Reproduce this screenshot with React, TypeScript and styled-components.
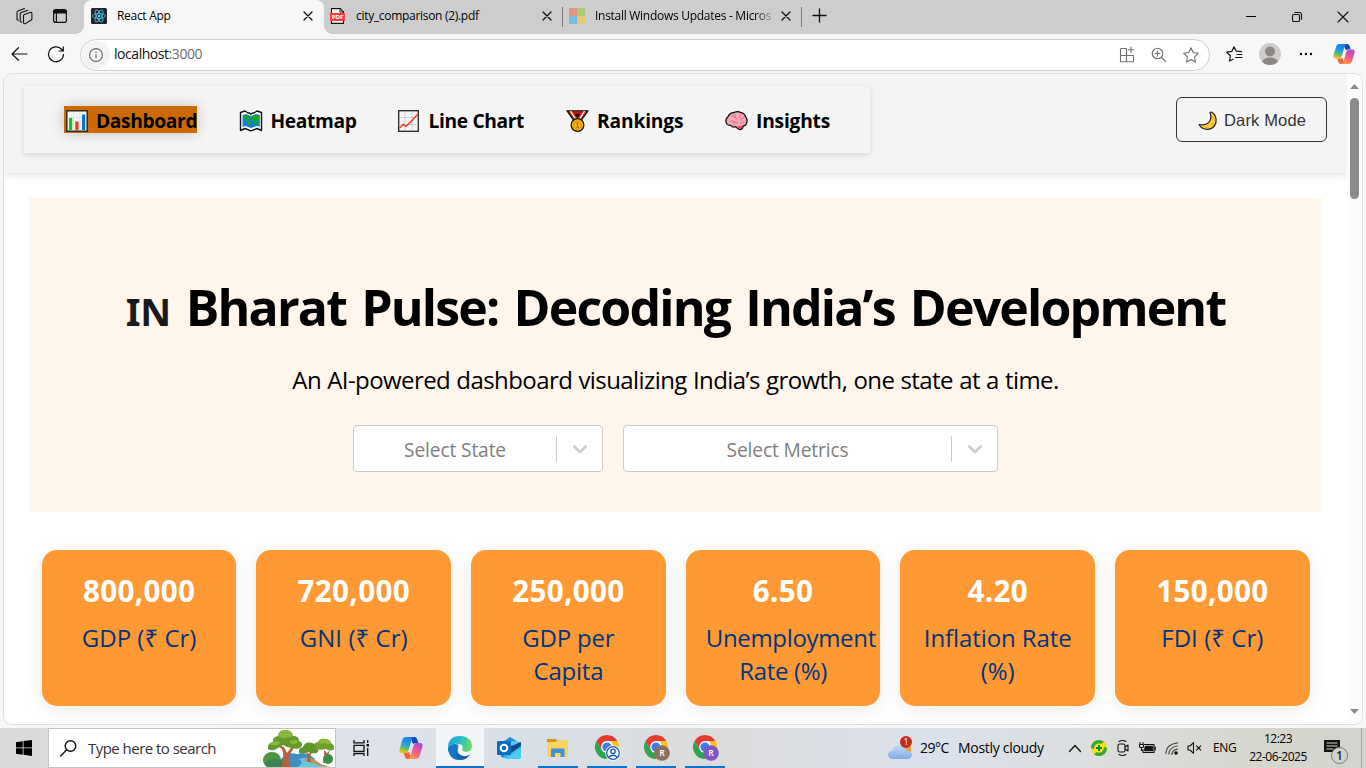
import React from "react";
import styled, { createGlobalStyle, css } from "styled-components";

const Global = createGlobalStyle`
  *, *::before, *::after { box-sizing: border-box; }
  html, body { margin: 0; padding: 0; }
  body {
    width: 1366px; height: 768px; overflow: hidden; background: #f7f7f7;
    font-family: "Open Sans", "Noto Sans", sans-serif; color: #000;
  }
  svg { display: block; flex: none; overflow: visible; }
`;

const Screen = styled.div`
  display: flex; flex-direction: column; width: 1366px; height: 768px; background: #f7f7f7;
`;

/* ---------- browser chrome ---------- */

const TabStrip = styled.div`
  display: flex; height: 34px; background: #cdcdcd; align-items: stretch;
`;
const StripTools = styled.div`
  width: 84px; display: flex; align-items: center; gap: 20px; padding: 0 0 2px 16px;
`;
const Tab = styled.div<{ $width: number; $active?: boolean; $divider?: boolean }>`
  position: relative; display: flex; align-items: center; width: ${p => p.$width}px;
  padding: 0 12px 2px ${p => (p.$active ? 7 : 6)}px; font-size: 12px; white-space: nowrap;
  ${p => p.$active && css`
    background: #f7f7f7; border-radius: 8px 8px 0 0;
    &::before, &::after { content: ""; position: absolute; bottom: 0; width: 8px; height: 8px; }
    &::before { left: -8px; background: radial-gradient(circle at 0 0, transparent 7.5px, #f7f7f7 8px); }
    &::after { right: -8px; background: radial-gradient(circle at 100% 0, transparent 7.5px, #f7f7f7 8px); }
  `}
  ${p => p.$divider && css`
    &::after { content: ""; position: absolute; right: 0; top: 7px; width: 1px; height: 20px; background: #7d7d7d; }
  `}
`;
const TabTitle = styled.span<{ $spacing: number; $fade?: boolean }>`
  flex: 1; min-width: 0; margin-left: 10px; line-height: 18px;
  letter-spacing: ${p => p.$spacing}px;
  ${p => p.$fade && css`mask-image: linear-gradient(90deg, #000 160px, rgba(0,0,0,.15) 178px);`}
`;
const NewTab = styled.div`padding: 9px 0 0 11px;`;
const WindowButtons = styled.div`
  margin-left: auto; display: flex; align-items: center; gap: 36px; padding: 0 18px 0 0;
`;

const Toolbar = styled.div`
  display: flex; align-items: center; height: 39px; padding: 0 11px 0 11px; background: #f7f7f7;
`;
const AddressBar = styled.div`
  display: flex; align-items: center; width: 1130px; height: 32px; margin: 2px 0 0 16px; flex: none;
  padding: 0 10px 0 1px; background: #fff; border: 1px solid #cfcfcf; border-radius: 16px;
`;
const ToolbarGap = styled.span`width: 20px; flex: none;`;
const SiteInfo = styled.div`
  display: grid; place-items: center; width: 28px; height: 28px; border-radius: 50%; background: #f3f3f3;
`;
const Url = styled.span`
  margin-left: 4px; padding-bottom: 2px; flex: 1; font-size: 14px; line-height: 20px; letter-spacing: -0.45px; color: #111;
  em { font-style: normal; color: #6b6b6b; }
`;
const AddressTools = styled.div`display: flex; gap: 16px; align-items: center;`;
const BarTools = styled.div`
  display: grid; grid-template-columns: 33px 40px 34px 22px; align-items: center; margin: 1px 0 0 16px;
`;

/* ---------- page ---------- */

const PageFrame = styled.div`
  display: flex; width: 1360px; height: 652px; margin-left: 3px; flex: none;
  border: 1px solid #dedede; border-radius: 9px; background: #fff; overflow: hidden;
`;
const Page = styled.div`flex: 1; min-width: 0; overflow: hidden;`;
const ScrollTrack = styled.div`
  width: 15px; background: #fcfcfc; display: flex; flex-direction: column; align-items: center;
  padding: 10px 0 10px;
`;
const ScrollThumb = styled.div`
  width: 9px; height: 101px; margin: 9px 0 auto; border-radius: 5px; background: #8b8b8b;
`;
const Header = styled.header`
  display: flex; justify-content: space-between; align-items: flex-start; height: 99px;
  padding: 12px 20px; background: #f4f4f4; box-shadow: 0 2px 8px rgba(0,0,0,.12);
`;
const Nav = styled.nav`
  display: flex; width: 846px; height: 67px; padding: 20px 40px; justify-content: space-between;
  background: #f4f4f4; box-shadow: 0 2px 6px rgba(0,0,0,.13);
`;
const NavItem = styled.a<{ $width: number; $spacing: number; $gap: number; $active?: boolean }>`
  display: flex; align-items: center; gap: ${p => p.$gap}px; width: ${p => p.$width}px; height: 27px;
  padding-top: 2px; padding-left: ${p => (p.$active ? 2 : 0)}px;
  font-size: 19.2px; font-weight: 700; line-height: 25px; white-space: nowrap;
  letter-spacing: ${p => p.$spacing}px;
  ${p => p.$active && css`background: #cc6a00; box-shadow: 0 0 14px rgba(0,0,0,.2);`}
`;
const ModeButton = styled.button`
  display: flex; align-items: center; gap: 6px; width: 151px; height: 45px; margin: 11px 0 0 0;
  padding: 2px 0 0 21px; border: 1px solid #333; border-radius: 6px; background: transparent;
  font: 16.5px "Liberation Sans", sans-serif; letter-spacing: 0.15px; color: #333; white-space: nowrap;
`;
const Hero = styled.section`
  display: flex; flex-direction: column; align-items: center; width: 1293px; height: 314px;
  margin: 25px 0 0 25px; padding-top: 75px; background: #fef5ec;
`;
const HeroTitle = styled.h1`
  margin: 0; height: 68px; font-size: 50px; line-height: 68px; font-weight: 700;
  letter-spacing: -1.83px; word-spacing: 4px; white-space: nowrap; display: flex;
`;
const CountryCode = styled.span`
  width: 60px; font: 700 38px/68px "Noto Sans", sans-serif; letter-spacing: -0.2px; padding-top: 4px; color: #1a1a1a;
`;
const Tagline = styled.p`
  margin: 23px 0 29px; font-size: 24px; line-height: 32px; letter-spacing: -0.58px; word-spacing: 0.5px; white-space: nowrap;
`;
const Filters = styled.div`display: flex; gap: 20px;`;
const Select = styled.div<{ $width: number }>`
  display: flex; align-items: center; width: ${p => p.$width}px; height: 47px;
  background: #fff; border: 1px solid #ccc; border-radius: 4px;
`;
const Placeholder = styled.span`
  flex: 1; text-align: center; font-size: 19.2px; line-height: 26px; letter-spacing: -0.13px; color: #808080;
  padding-top: 3px;
`;
const Separator = styled.span`width: 1px; height: 26px; background: #ccc;`;
const Indicator = styled.span`width: 45px; display: grid; place-items: center; padding-top: 1px;`;

const Metrics = styled.section`
  display: grid; grid-template-columns: repeat(6, minmax(0, 1fr)); gap: 20px;
  width: 1267.9px; margin: 38px 0 0 37.8px;
`;
const Card = styled.article`
  height: 156px; padding: 21px 20px 19px; border-radius: 15px; background: #ff9933;
  box-shadow: 0 4px 20px rgba(0,0,0,.08); text-align: center;
`;
const CardValue = styled.div`
  font-size: 29.6px; line-height: 40px; font-weight: 700; letter-spacing: 0.35px; color: #fff;
`;
const CardLabel = styled.div<{ $spacing: number }>`
  margin-top: 10px; font-size: 24px; line-height: 33px; letter-spacing: ${p => p.$spacing}px; color: #003580;
`;

/* ---------- taskbar ---------- */

const Taskbar = styled.footer`
  display: flex; height: 40px; margin-top: 3px; flex: none;
  background: linear-gradient(90deg, #dcd9d9 0, #dfe2ea 27%, #d9dfe6 40%, #dcdcdc 52%, #dbe1ec 68%, #dcdedf 80%, #d6d6ce 93%, #d4d4cf 100%);
`;
const StartButton = styled.div`width: 48px; display: grid; place-items: center;`;
const SearchBox = styled.div`
  display: flex; align-items: center; width: 288px; margin-right: 1px; padding-left: 11px; background: #fff;
  border: 1px solid #c4c4c4; overflow: hidden;
`;
const SearchText = styled.span`
  margin-left: 11px; flex: 1; font-size: 15px; line-height: 20px; letter-spacing: -0.53px; color: #333; white-space: nowrap;
`;
const TaskItem = styled.div<{ $focused?: boolean; $running?: boolean; $shift?: number }>`
  position: relative; width: 49px; display: grid; place-items: center; padding-left: ${p => p.$shift ?? 0}px;
  ${p => p.$focused && css`background: linear-gradient(90deg, transparent 1px, #f2f4f7 1px);`}
  ${p => p.$running && css`
    &::after {
      content: ""; position: absolute; bottom: 0; height: 2px; background: #0a74cf;
      left: ${p.$focused ? 1 : 5}px; right: ${p.$focused ? 0 : 4}px;
    }
  `}
`;
const Tray = styled.div`display: flex; align-items: center; margin-left: auto; height: 40px;`;
const TraySlot = styled.div<{ $width: number; $start?: boolean; $drop?: number }>`
  width: ${p => p.$width}px; display: flex; justify-content: ${p => (p.$start ? "flex-start" : "center")};
  padding-top: ${p => p.$drop ?? 0}px;
`;
const TrayText = styled.span<{ $width: number; $size: number; $spacing: number }>`
  width: ${p => p.$width}px; font-size: ${p => p.$size}px; letter-spacing: ${p => p.$spacing}px;
  line-height: 18px; white-space: nowrap;
`;
const Clock = styled.div`
  width: 62px; margin: 0 1px 0 9px; text-align: center; font-size: 12px; line-height: 18px; letter-spacing: -0.5px; white-space: nowrap;
`;
const ShowDesktop = styled.div`width: 5px; height: 40px; border-left: 1px solid #a8a8a4;`;

/* ---------- icons ---------- */

const line = { fill: "none", stroke: "#111", strokeWidth: 1.1, strokeLinecap: "round", strokeLinejoin: "round" } as const;

const WorkspacesIcon = () => (
  <svg width="17" height="17" viewBox="0 0 17 17" {...line}>
    <path d="M7.500 7.800q0-1 1-1.400L14 4.500q1.800-.4 1.900 1.100v5.100q0 1-1 1.500L9.200 15.600Q7.500 16 7.500 14.600z" />
    <path d="M4.200 13.500V6.200q0-1.200 1-1.600L11.800 2.300M1 11.500V4.700q0-1.200 1-1.600L8.500.6M1 11.500l1.200.8M4.200 13.500l1.300.8" />
  </svg>
);
const TabActionsIcon = () => (
  <svg width="14" height="14" viewBox="0 0 14 14" {...line} strokeWidth="1.2">
    <rect x=".6" y=".6" width="12.8" height="12.8" rx="2.2" />
    <path d="M1 1.500h12v2.500H1z" fill="#111" /><path d="M3.400 4v9" />
  </svg>
);
const ReactIcon = () => (
  <svg width="16" height="16" viewBox="0 0 16 16">
    <rect width="16" height="16" rx="1.5" fill="#20232a" />
    <g fill="none" stroke="#4db6d2" strokeWidth=".9">
      <ellipse cx="8" cy="8" rx="6.6" ry="2.5" />
      <ellipse cx="8" cy="8" rx="6.6" ry="2.5" transform="rotate(60 8 8)" />
      <ellipse cx="8" cy="8" rx="6.6" ry="2.5" transform="rotate(120 8 8)" />
    </g>
    <circle cx="8" cy="8" r="1.3" fill="#61dafb" />
  </svg>
);
const PdfText = styled.text`font: 700 6px "Open Sans", sans-serif; fill: #fff;`;
const PdfIcon = () => (
  <svg width="16" height="16" viewBox="0 0 16 16">
    <path d="M1.500.6h8.700l3.300 3.300v11.500h-12z" fill="#fff" stroke="#111" strokeWidth="1.1" />
    <path d="M10 .6v3.500h3.500" fill="none" stroke="#111" />
    <rect y="5" width="15" height="8" fill="#ff3b3b" />
    <PdfText x="7.5" y="11.200" textAnchor="middle">PDF</PdfText>
  </svg>
);
const MicrosoftIcon = () => (
  <svg width="16" height="16" viewBox="0 0 16 16">
    <path fill="#e2957f" d="M0 0h8v8H0z" /><path fill="#accb77" d="M8 0h8v8H8z" />
    <path fill="#78bbdc" d="M0 8h8v8H0z" /><path fill="#e5c776" d="M8 8h8v8H8z" />
  </svg>
);
const CloseIcon = ({ size = 8 }: { size?: number }) => (
  <svg width={size} height={size} viewBox="0 0 10 10" {...line} strokeWidth={size > 8 ? 1.1 : 1.6}>
    <path d="m0 0 10 10M10 0 0 10" />
  </svg>
);
const PlusIcon = () => <svg width="13" height="13" viewBox="0 0 13 13" {...line} strokeWidth="1.3"><path d="M6.500 0v13M0 6.500h13" /></svg>;
const MinimizeIcon = () => <svg width="10" height="10" viewBox="0 0 10 10"><path d="M0 4h10v1H0z" /></svg>;
const RestoreIcon = () => (
  <svg width="10" height="10" viewBox="0 0 10 10" {...line}>
    <rect x=".5" y="2.5" width="7" height="7" rx="1.3" /><path d="M2.700.5H7.500q2 0 2 2v4.800" />
  </svg>
);
const BackIcon = () => <svg width="17" height="14" viewBox="0 0 17 14" {...line} strokeWidth="1.2"><path d="M16 7H1M7.500.7 1 7l6.500 6.300" /></svg>;
const ReloadIcon = () => (
  <svg width="16" height="16" viewBox="0 0 16 16" {...line} strokeWidth="1.2">
    <path d="M15.500 8.500A7.500 7.500 0 1 1 13.300 3L15.200 5M15.300.8V5H11" />
  </svg>
);
const InfoIcon = () => (
  <svg width="14" height="14" viewBox="0 0 14 14" fill="none" stroke="#666" strokeWidth="1.1">
    <circle cx="7" cy="7" r="6.4" /><path d="M7 6.200v4M7 3.800v1.200" />
  </svg>
);
const gray = { ...line, stroke: "#707070" };
const AppsAddIcon = () => (
  <svg width="16" height="16" viewBox="0 0 16 16" {...gray}>
    <path d="M7.500 1.500H2.200q-.7 0-.7.700V14q0 .7.700.7H13.800q.7 0 .7-.7V8.500H1.500M7.500 1.500v13M12 0v5.500M9.300 2.800h5.500" />
  </svg>
);
const ZoomIcon = () => (
  <svg width="16" height="16" viewBox="0 0 16 16" {...gray}>
    <circle cx="6.5" cy="6.5" r="5.3" /><path d="m10.500 10.500 4.300 4.200M6.500 4v5M4 6.500h5" />
  </svg>
);
const StarIcon = () => (
  <svg width="16" height="16" viewBox="0 0 16 16" {...gray}>
    <path d="m8 .8 2.200 4.700 5.200.7-3.800 3.600.9 5.200L8 12.500 3.500 15l.9-5.200L.6 6.200l5.200-.7z" />
  </svg>
);
const FavoritesIcon = () => (
  <svg width="17" height="16" viewBox="0 0 17 16" {...line} strokeWidth="1.2">
    <path d="M15.500 5.700 10.300 5.200 8 .8 5.800 5.400.7 6.200l3.700 3.600-.9 5.200L7 13.200M11 8.500h5M9.500 11.500H16" />
  </svg>
);
const AvatarIcon = () => (
  <svg width="22" height="22" viewBox="0 0 22 22">
    <defs><clipPath id="avatar"><circle cx="11" cy="11" r="11" /></clipPath></defs>
    <circle cx="11" cy="11" r="11" fill="#d0cecb" />
    <g clipPath="url(#avatar)" fill="#8b8885"><circle cx="11" cy="8.5" r="5" /><ellipse cx="11" cy="19.5" rx="8" ry="5" /></g>
  </svg>
);
const MoreIcon = () => (
  <svg width="14" height="4" viewBox="0 0 14 4"><circle cx="2" cy="2" r="1.2" /><circle cx="7" cy="2" r="1.2" /><circle cx="12" cy="2" r="1.2" /></svg>
);
const CopilotIcon = ({ id, size }: { id: string; size: number }) => (
  <svg width={size} height={size} viewBox="0 0 24 24">
    <defs>
      <linearGradient id={id + "a"} x1=".6" y1="0" x2=".3" y2="1"><stop stopColor="#1a7fe0" /><stop offset=".45" stopColor="#1aa0e8" /><stop offset=".7" stopColor="#63bd6a" /><stop offset="1" stopColor="#f2c512" /></linearGradient>
      <linearGradient id={id + "b"} x1=".8" y1="0" x2=".3" y2="1"><stop stopColor="#a04be8" /><stop offset=".5" stopColor="#f0588c" /><stop offset="1" stopColor="#ff9a4a" /></linearGradient>
    </defs>
    <path d="M11 1h4.500q2 0 2.700 2.200L19.300 7q-3.300-.3-5.300 1z" fill="#1549b8" />
    <path d="M6.800 1H15q-1.700.2-2.500 3l-3 10.500Q8.700 17 6.500 17H3Q-.5 17 .6 13L3.400 3.700Q4.300 1 6.800 1z" fill={`url(#${id}a)`} />
    <path d="M13 23H8.500q-2 0-2.700-2.200L4.700 17q3.300.3 5.300-1z" fill="#f2643c" />
    <path d="M17.200 23H9q1.700-.2 2.500-3l3-10.500Q15.300 7 17.500 7H21q3.500 0 2.400 4l-2.800 9.300q-.9 2.700-3.400 2.700z" fill={`url(#${id}b)`} />
  </svg>
);

const BarChartIcon = () => (
  <svg width="22" height="22" viewBox="0 0 22 22">
    <rect x=".8" y=".8" width="20.4" height="20.4" fill="#f4f4f4" stroke="#222" strokeWidth="1.4" />
    <path d="M7.500 2v18M14 2v18M2 7.500h18M2 14h18" stroke="#ddd" strokeWidth=".7" />
    <path fill="#16c60c" d="M3 8h3.200v12H3z" /><path fill="#f03a17" d="M9.300 11.500h3.200V20H9.300z" /><path fill="#0078d7" d="M16 4.500h3.200V20H16z" />
  </svg>
);
const MapIcon = () => (
  <svg width="24" height="22" viewBox="0 0 24 22">
    <path d="M1.500 2.500 6 1l3 2h1.500L12 4.300 13.500 3H15l3-2 4.500 1.500v18L18 18.500l-6 2.300-6-2.300-4.500 2z" fill="#fff" stroke="#111" strokeWidth="1.4" strokeLinejoin="round" />
    <path d="M3.500 5 7 4l5 2 5-2 3.800 1v11.800L17.500 16 12 18l-5.500-2-3 1z" fill="#1580dc" />
    <path d="M5 6l4-1 2.200 1.800L10 9.500 7.500 11 5 8.500zM9 10.500l3 2-1.500 4L8.700 13zM12.500 7l3.500-2.200L20 6.500v3.500l-2 1-2 4.500-2-4.500-1.200-1.500zM18 13.500h2v2.500h-2z" fill="#17a81e" />
  </svg>
);
const LineChartIcon = () => (
  <svg width="21" height="22" viewBox="0 0 21 22">
    <rect x=".7" y=".7" width="19.600" height="20.600" fill="#f5f5f5" stroke="#222" strokeWidth="1.3" />
    <path d="M7 1.500v19M14 1.500v19M1.500 7.500h18M1.500 14.500h18" stroke="#c9c9c9" strokeWidth=".9" />
    <path d="m1.500 18 4-3.500L8 16.300l4-3.800 8-8.500" fill="none" stroke="#f03a17" strokeWidth="1.4" />
  </svg>
);
const MedalIcon = () => (
  <svg width="23" height="22" viewBox="0 0 23 22">
    <path d="M1 .8h21L15 10.500H8z" fill="#e4281c" stroke="#111" strokeWidth="1.3" strokeLinejoin="round" />
    <path d="m4.500 1 5.500 9M18.500 1 13 10" stroke="#fff" strokeWidth="1.3" /><path d="M6.500 1.500h10l-5 6z" fill="#b3170e" /><path d="M8.500 4h6l-3 4z" fill="#111" />
    <circle cx="11.5" cy="15" r="6.400" fill="#f7b50c" stroke="#111" strokeWidth="1.2" />
    <circle cx="11.5" cy="15" r="4" fill="none" stroke="#c98a06" strokeWidth=".8" />
    <path d="m10.300 13.500 1.400-.8v4.500M10.200 17.300h3" fill="none" stroke="#8d6205" strokeWidth=".8" />
  </svg>
);
const BrainIcon = () => (
  <svg width="23" height="20" viewBox="0 0 23 20">
    <path d="M9 1.500Q13-.5 16 1.700q3.500.5 4.500 4 2.500 3 1 6.800-.8 2.200-3.300 2.500-.5 3.800-3.200 3.500-2.700-.5-4-2.800Q7.500 17 6 14.500 1.500 14.500 1 11q-.5-3.500 1.800-5Q4.500 1.800 9 1.500z" fill="#f5a9b8" stroke="#111" strokeWidth="1.3" strokeLinejoin="round" />
    <path d="M12 15.500q3 0 5.500-1-.3 3.300-2.500 3.200-2-.2-3-2.200z" fill="#e8455a" />
    <path d="M6.500 5.500q2.500-1 3.500 1M10 2.500v4l3 2M16 3.500q-2 1.500-1 4M19 6.500q-2.500.5-3 3M5 10.500q3-1 5 .5l3 1M9 11v3M19.500 11q-3-.5-4 2" fill="none" stroke="#dd6f86" strokeWidth="1" />
  </svg>
);
const MoonIcon = () => (
  <svg width="20" height="20" viewBox="0 0 20 20">
    <path d="M13.500 1Q19 4.500 18 11.500 16 18.200 9.500 18.300 3.500 18.200 1 13.500 8.500 14.800 11.500 10.500 14 7 12 1.500z" fill="#ffc83d" stroke="#222" strokeWidth="1.2" strokeLinejoin="round" />
    <path d="M15 7h1M14 13h1.200M8 16h1" stroke="#d99a10" strokeWidth="1.2" strokeLinecap="round" />
  </svg>
);
const ChevronIcon = () => (
  <svg width="14" height="9" viewBox="0 0 14 9" fill="none" stroke="#ccc" strokeWidth="2.5" strokeLinecap="round" strokeLinejoin="round">
    <path d="m1.300 1.500 5.700 5.700 5.700-5.700" />
  </svg>
);
const ScrollArrow = ({ down = false }: { down?: boolean }) => (
  <svg width="9" height="5" viewBox="0 0 9 5"><path d={down ? "M0 0h9L4.500 5z" : "M0 5h9L4.500 0z"} fill="#8b8b8b" /></svg>
);

const WindowsIcon = () => (
  <svg width="16" height="16" viewBox="0 0 16 16"><path d="M0 2.200 6.700 1.200v6.300H0zM7.500 1.100 16 0v7.500H7.500zM0 8.300h6.700v6.400L0 13.800zM7.500 8.300H16V16l-8.500-1.200z" /></svg>
);
const SearchIcon = () => (
  <svg width="17" height="17" viewBox="0 0 17 17" {...line} strokeWidth="1.4"><circle cx="10.500" cy="6" r="5.300" /><path d="M6.700 9.800.7 16" /></svg>
);
const TreesIcon = () => (
  <svg width="72" height="38" viewBox="0 0 72 38">
    <path d="M18 30q8-8 16-5 10-3 18 5v8H18z" fill="#3f8fc4" />
    <path d="M34 38q8-4 2-8 10-3 16 1 6 3 8 7z" fill="#64c8de" />
    <path d="M40 31q9-4 14 2 6 4 14 4l-7 1q-9-3-21-7z" fill="#c98d55" />
    <ellipse cx="9" cy="31" rx="9" ry="8" fill="#4f9440" /><ellipse cx="12" cy="35" rx="10" ry="5" fill="#3b8350" />
    <path d="M18 38q4-10 1-18l-7-5 9 3 3 6 6-8 2 1-6 10q-1 6 2 11z" fill="#b5603d" />
    <path d="M44 33q2-6-2-12l4 4 4-4-3 7 1 5zM60 34q2-7 1-13l3 3 3-3-3 8v5z" fill="#b5603d" />
    <path d="M5 20q-1-6 5-7-1-5 5-6Q16 1 22 1q7 0 8 6 6 0 6 5 5 2 2 6-2 3-9 1l-5-1-4-2-5 3q-5 4-10 1z" fill="#64992d" />
    <path d="M15 7Q16 1 22 1q7 0 8 6-2 2-5 1-6 3-10-1zM10 13q4-2 7 0 0 3-4 3-4 1-6-1 1-2 3-2zM27 12q4-2 8 0 0 3-4 3-5 0-4-3z" fill="#8ab83c" />
    <path d="M36 24q-1-5 4-6 2-6 9-4 5 1 4 5 4 2 1 5-6 1-9-1-5 3-9 1z" fill="#5d962c" />
    <path d="M50 19q0-5 5-6 2-4 7-3 5 0 6 4 4 2 3 6-2 3-8 0-8 2-13-1z" fill="#6fa02f" />
    <path d="M55 13q2-4 7-3 5 0 6 4-3 2-6 0-4 2-7-1z" fill="#8ab83c" />
    <ellipse cx="65" cy="30" rx="5" ry="5" fill="#3d8b45" />
  </svg>
);
const TaskViewIcon = () => (
  <svg width="17" height="16" viewBox="0 0 17 16" fill="none" stroke="#111" strokeWidth="1.3">
    <path d="M1 0v2.800h10V0M1 16v-2.500h10V16M1 5.300h10v6H1zM14.700 0v3M14.700 8v8" /><path d="M13.500 4h2.500v2.500h-2.500z" fill="#111" stroke="none" />
  </svg>
);
const EdgeIcon = () => (
  <svg width="24" height="24" viewBox="0 0 24 24">
    <defs>
      <linearGradient id="edgeTop" x1="0" y1=".3" x2="1" y2=".5"><stop stopColor="#1a9fdd" /><stop offset=".5" stopColor="#27bfc5" /><stop offset="1" stopColor="#6ee05a" /></linearGradient>
      <linearGradient id="edgeBody" x1="0" y1="0" x2="1" y2="1"><stop stopColor="#1b86d6" /><stop offset="1" stopColor="#0c4f9e" /></linearGradient>
    </defs>
    <path d="M0 12q1 12 12 12 6.500 0 10-5.500-5 3-9.500.5Q8 16 10.500 11 5 6 0 12z" fill="url(#edgeBody)" />
    <path d="M0 12Q0 0 12 0q11.500.5 12 10.500-.3 5-5.500 5.300-5.500 0-4-3Q16 8.500 10.500 8 3 7 0 12z" fill="url(#edgeTop)" />
    <path d="M0 12q4-6 11-3-5 3-4 8.500 1.500 5 7 6.300Q1.500 25 0 12z" fill="#1577c8" />
    <path d="M11 11q-2 5 3 7.500 4.500 1.500 8-.8-2 0-4-.7-5-.5-3.800-3.600.5-2.400-1.500-3-1.200 0-1.700.6z" fill="#f4f6f8" />
  </svg>
);
const OutlookIcon = () => (
  <svg width="24" height="22" viewBox="0 0 24 22">
    <path d="M4 6 13 0l10 6v14H4z" fill="#1a8fdf" /><path d="M7 4h14v9H7z" fill="#59c6f2" />
    <path d="M13 13 24 5.500V21H5z" fill="#32b8ef" /><path d="m12 10 12-5v4l-10 7z" fill="#104a91" /><path d="m8 22 16-11v9q0 2-2 2z" fill="#4ccbf2" />
    <rect y="4" width="14" height="14" rx="1" fill="#0f6cbd" /><circle cx="7" cy="11" r="3.300" fill="none" stroke="#fff" strokeWidth="1.9" />
  </svg>
);
const FolderIcon = () => (
  <svg width="21" height="18" viewBox="0 0 21 18">
    <path d="M0 2.700h9.500L11 1h10v17H0z" fill="#fad366" /><path d="M0 0h9l1 1.700-1 1.300H0z" fill="#d9960f" />
    <path d="M4 18v-7.500q0-1 1-1h11.500q1 0 1 1V18h-4v-4H8v4z" fill="#3d93d6" />
  </svg>
);
const BadgeLetter = styled.text`font: 600 8.5px "Open Sans", sans-serif; fill: #fff;`;
const ChromeIcon = ({ badge, person = false }: { badge: string; person?: boolean }) => (
  <svg width="26" height="26" viewBox="0 0 26 26">
    <path d="M12 0A12 12 0 0 0 1.600 6L6.800 15 12 12V6h10.400A12 12 0 0 0 12 0z" fill="#e33b2e" />
    <path d="M1.600 6A12 12 0 0 0 12 24l5.200-9L12 12 6.800 15z" fill="#2da44e" />
    <path d="M22.400 6A12 12 0 0 1 12 24l5.200-9A6 6 0 0 0 17 8V6z" fill="#fbc116" />
    <circle cx="12" cy="12" r="5.900" fill="#fff" /><circle cx="12" cy="12" r="4.600" fill="#3b7ded" />
    <circle cx="18" cy="18" r="7.800" fill={person ? "#fff" : badge} />
    {person ? (
      <g fill="none" stroke="#1558c0" strokeWidth="1.3"><circle cx="18" cy="18" r="6.300" /><circle cx="18" cy="16.300" r="2.200" /><path d="M13.800 22q4.200-3.500 8.400 0" /></g>
    ) : <BadgeLetter x="18" y="21.200" textAnchor="middle">R</BadgeLetter>}
  </svg>
);
const WeatherBadge = styled.text`font: 9px "Open Sans", sans-serif; fill: #fff;`;
const WeatherIcon = () => (
  <svg width="25" height="24" viewBox="0 0 25 24">
    <defs><linearGradient id="cloud" x1="0" y1="0" x2="0" y2="1"><stop stopColor="#c8dcf8" /><stop offset="1" stopColor="#80a9e6" /></linearGradient></defs>
    <circle cx="19" cy="14" r="4.500" fill="#f2a33a" />
    <path d="M5 23q-5-.3-5-4.500Q.3 15 4.500 14.500 6 8.500 11.500 8.700 17 9 18 14.500q6 0 6 4.500-.5 4-5 4z" fill="url(#cloud)" />
    <circle cx="18" cy="6" r="6" fill="#c42b1c" /><WeatherBadge x="18" y="9.300" textAnchor="middle">1</WeatherBadge>
  </svg>
);
const CaretUp = () => <svg width="12" height="7" viewBox="0 0 12 7" {...line} strokeWidth="1.3"><path d="m.5 6.500 5.500-6 5.500 6" /></svg>;
const ShieldIcon = () => (
  <svg width="16" height="16" viewBox="0 0 16 16">
    <circle cx="8" cy="8" r="8" fill="#f7d916" /><path d="M0 8a8 8 0 0 1 13-6.200L10 4Q4 3 3 9zM16 8a8 8 0 0 1-13 6.200L6 12q6 1 7-5z" fill="#36a936" />
    <circle cx="8" cy="8" r="4.500" fill="#fbe22c" /><path d="M8 5v6M5 8h6" stroke="#16882a" strokeWidth="2" />
  </svg>
);
const MeetIcon = () => (
  <svg width="12" height="16" viewBox="0 0 12 16" {...line}><rect x="1" y="4" width="7" height="8" rx="1.5" /><path d="m8 7 3-2v6L8 9M2 1.500q3.500-2 7 0M2 14.500q3.500 2 7 0" /></svg>
);
const BatteryIcon = () => (
  <svg width="17" height="12" viewBox="0 0 17 12" {...line}><path d="M5.500 2.500h9.500v8H4V7.500M16.300 5v3M1 .5v2M4 .5v2M.5 2.500h4v2q0 1-1 1h-2q-1 0-1-1zM2.500 5.500v3H4" /><path d="M6.500 4.300h7v4.400H5.800V6.500z" fill="#111" /></svg>
);
const WifiIcon = () => (
  <svg width="13" height="13" viewBox="0 0 13 13" {...line} strokeWidth="1.2">
    <path d="M.8 11.500Q1.500 2 12.500.8M3.800 12Q4.500 5 12.500 4M6.800 12.300Q7.500 8 12.500 7.200" stroke="#4a4a4a" /><circle cx="11" cy="11" r="1.2" fill="#111" />
  </svg>
);
const MutedIcon = () => <svg width="15" height="12" viewBox="0 0 15 12" {...line}><path d="M1 4h2l3.500-3.300v10.600L3 8H1zM9.500 3.800l4.300 4.400M13.800 3.800 9.500 8.200" /></svg>;
const NoticeCount = styled.text`font: 600 12px "Open Sans", sans-serif; fill: #222;`;
const NoticeIcon = () => (
  <svg width="24" height="24" viewBox="0 0 24 24">
    <path d="M0 0h16v12h-3v4l-4-4H0z" fill="#111" /><path d="M2.500 3h11M2.500 6h11M2.500 9h7" stroke="#d6d6d0" />
    <circle cx="15.500" cy="15.500" r="8" fill="#d5d5d0" stroke="#777" /><NoticeCount x="15.500" y="19.800" textAnchor="middle">1</NoticeCount>
  </svg>
);

/* ---------- data ---------- */

const navItems = [
  { label: "Dashboard", width: 133, gap: 8, spacing: -0.35, icon: <BarChartIcon />, active: true },
  { label: "Heatmap", width: 118, gap: 8, spacing: -0.35, icon: <MapIcon /> },
  { label: "Line Chart", width: 126, gap: 9.5, spacing: -0.35, icon: <LineChartIcon /> },
  { label: "Rankings", width: 118, gap: 8.5, spacing: -0.15, icon: <MedalIcon /> },
  { label: "Insights", width: 105, gap: 8, spacing: -0.2, icon: <BrainIcon /> },
];

const metrics = [
  { value: "800,000", label: "GDP (₹ Cr)", spacing: 0 },
  { value: "720,000", label: "GNI (₹ Cr)", spacing: 0.05 },
  { value: "250,000", label: "GDP per Capita", spacing: -0.2 },
  { value: "6.50", label: "Unemployment Rate (%)", spacing: -0.33 },
  { value: "4.20", label: "Inflation Rate (%)", spacing: -0.1 },
  { value: "150,000", label: "FDI (₹ Cr)", spacing: 0.05 },
];

const BrowserChrome = () => (
  <>
    <TabStrip>
      <StripTools><WorkspacesIcon /><TabActionsIcon /></StripTools>
      <Tab $width={240} $active><ReactIcon /><TabTitle $spacing={-0.3}>React App</TabTitle><CloseIcon /></Tab>
      <Tab $width={239} $divider><PdfIcon /><TabTitle $spacing={-0.3}>city_comparison (2).pdf</TabTitle><CloseIcon /></Tab>
      <Tab $width={239} $divider><MicrosoftIcon /><TabTitle $spacing={-0.28} $fade>Install Windows Updates - Micros</TabTitle><CloseIcon /></Tab>
      <NewTab><PlusIcon /></NewTab>
      <WindowButtons><MinimizeIcon /><RestoreIcon /><CloseIcon size={10} /></WindowButtons>
    </TabStrip>
    <Toolbar>
      <BackIcon />
      <ToolbarGap />
      <ReloadIcon />
      <AddressBar>
        <SiteInfo><InfoIcon /></SiteInfo>
        <Url>localhost<em>:3000</em></Url>
        <AddressTools><AppsAddIcon /><ZoomIcon /><StarIcon /></AddressTools>
      </AddressBar>
      <BarTools><FavoritesIcon /><AvatarIcon /><MoreIcon /><CopilotIcon id="bar" size={22} /></BarTools>
    </Toolbar>
  </>
);

const Dashboard = () => (
  <PageFrame>
    <Page>
      <Header>
        <Nav>
          {navItems.map(n => (
            <NavItem key={n.label} $width={n.width} $spacing={n.spacing} $gap={n.gap} $active={n.active}>{n.icon}{n.label}</NavItem>
          ))}
        </Nav>
        <ModeButton><MoonIcon />Dark Mode</ModeButton>
      </Header>
      <Hero>
        <HeroTitle><CountryCode>IN</CountryCode>Bharat Pulse: Decoding India’s Development</HeroTitle>
        <Tagline>An AI-powered dashboard visualizing India’s growth, one state at a time.</Tagline>
        <Filters>
          <Select $width={250}><Placeholder>Select State</Placeholder><Separator /><Indicator><ChevronIcon /></Indicator></Select>
          <Select $width={375}><Placeholder>Select Metrics</Placeholder><Separator /><Indicator><ChevronIcon /></Indicator></Select>
        </Filters>
      </Hero>
      <Metrics>
        {metrics.map(m => (
          <Card key={m.label}><CardValue>{m.value}</CardValue><CardLabel $spacing={m.spacing}>{m.label}</CardLabel></Card>
        ))}
      </Metrics>
    </Page>
    <ScrollTrack><ScrollArrow /><ScrollThumb /><ScrollArrow down /></ScrollTrack>
  </PageFrame>
);

const WindowsTaskbar = () => (
  <Taskbar>
    <StartButton><WindowsIcon /></StartButton>
    <SearchBox><SearchIcon /><SearchText>Type here to search</SearchText><TreesIcon /></SearchBox>
    <TaskItem><TaskViewIcon /></TaskItem>
    <TaskItem><CopilotIcon id="task" size={24} /></TaskItem>
    <TaskItem $focused $running><EdgeIcon /></TaskItem>
    <TaskItem><OutlookIcon /></TaskItem>
    <TaskItem $running><FolderIcon /></TaskItem>
    <TaskItem $running $shift={3}><ChromeIcon badge="#fff" person /></TaskItem>
    <TaskItem $running $shift={3}><ChromeIcon badge="#8d6e63" /></TaskItem>
    <TaskItem $running $shift={3}><ChromeIcon badge="#7e57c2" /></TaskItem>
    <Tray>
      <TraySlot $width={32} $start><WeatherIcon /></TraySlot>
      <TrayText $width={38} $size={14} $spacing={-0.5}>29°C</TrayText>
      <TrayText $width={105} $size={14} $spacing={-0.3}>Mostly cloudy</TrayText>
      <TraySlot $width={24}><CaretUp /></TraySlot>
      <TraySlot $width={24}><ShieldIcon /></TraySlot>
      <TraySlot $width={24}><MeetIcon /></TraySlot>
      <TraySlot $width={24}><BatteryIcon /></TraySlot>
      <TraySlot $width={24}><WifiIcon /></TraySlot>
      <TraySlot $width={22}><MutedIcon /></TraySlot>
      <TraySlot $width={8} />
      <TrayText $width={25} $size={12} $spacing={-0.4}>ENG</TrayText>
      <Clock>12:23<br />22-06-2025</Clock>
      <TraySlot $width={51} $drop={7}><NoticeIcon /></TraySlot>
      <ShowDesktop />
    </Tray>
  </Taskbar>
);

export default function App() {
  return (
    <Screen>
      <Global />
      <BrowserChrome />
      <Dashboard />
      <WindowsTaskbar />
    </Screen>
  );
}
